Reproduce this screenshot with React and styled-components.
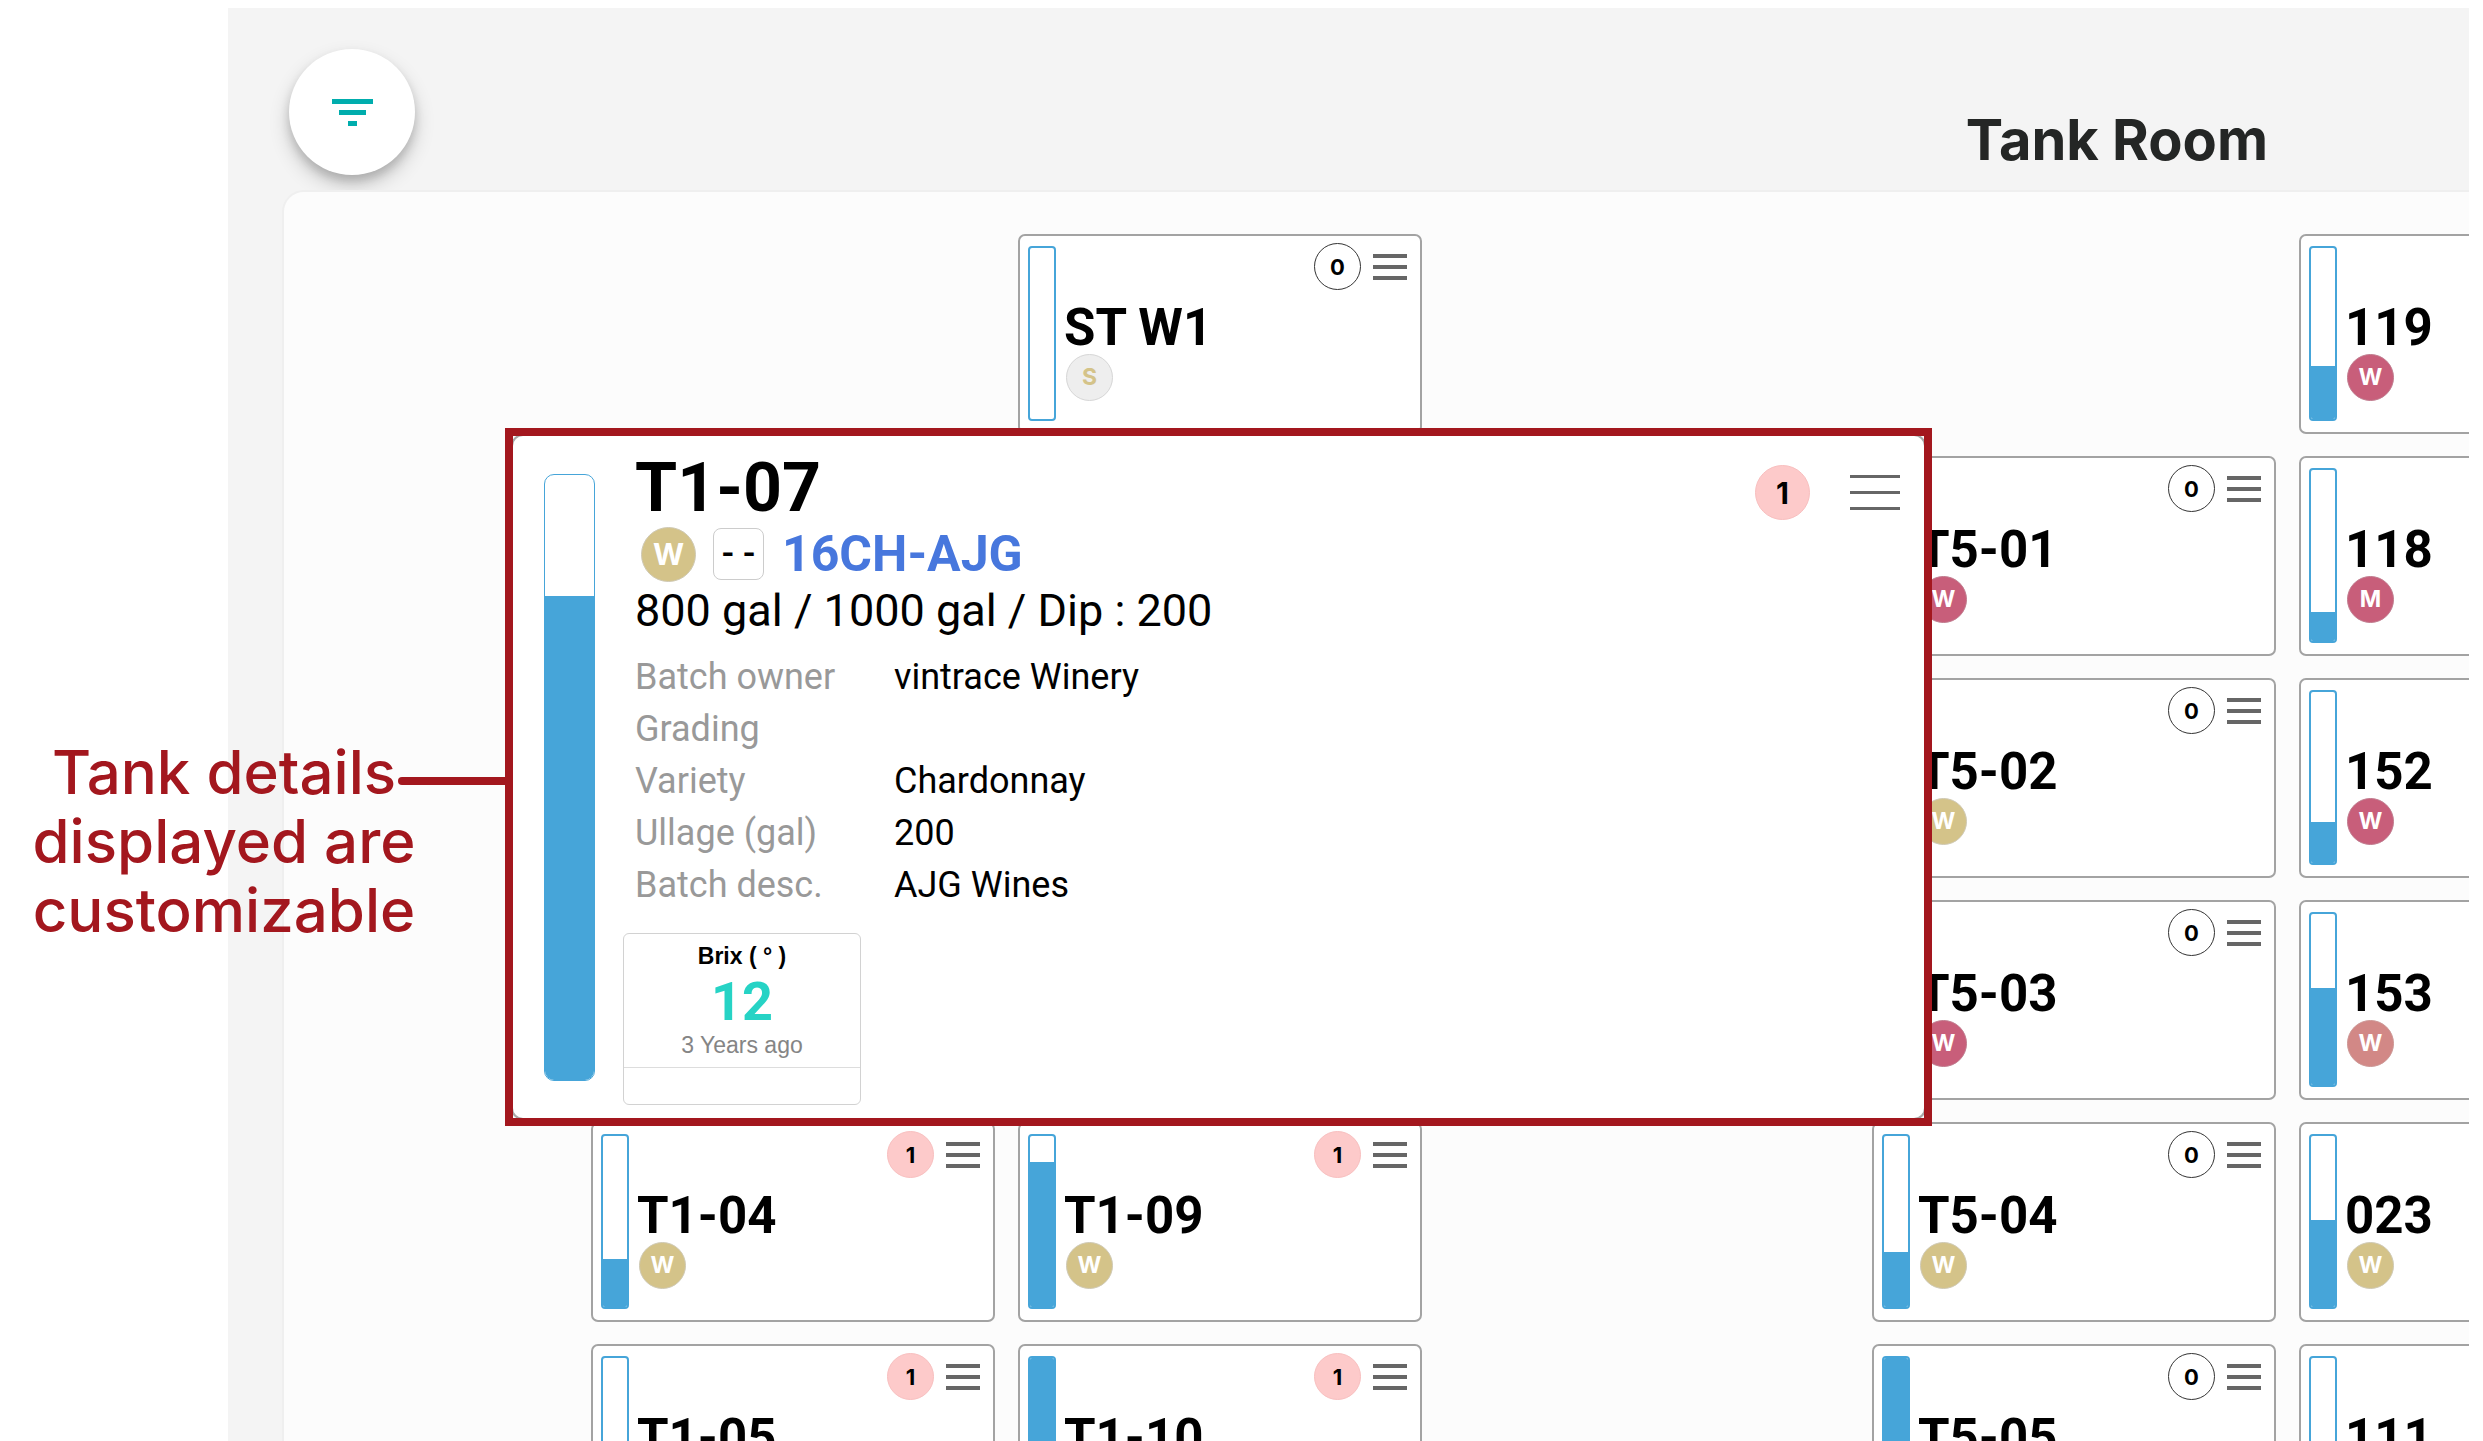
import React from "react";
import styled, { createGlobalStyle } from "styled-components";

const GlobalStyle = createGlobalStyle`
  *, *::before, *::after { box-sizing: border-box; }
  body {
    margin: 0;
    background: #fff;
    color: #000;
    font-family: Roboto, "Liberation Sans", sans-serif;
  }
  button { font: inherit; color: inherit; padding: 0; cursor: pointer; }
  h1, h2, p, dl, dd { margin: 0; }
`;

const geometric = `Inter, "Open Sans", sans-serif`;

const tones = {
  white: { bg: "#d4c389", fg: "#fff", line: "#cfc9b4" },
  red: { bg: "#c85e7a", fg: "#fff", line: "#c07a8d" },
  rose: { bg: "#d28886", fg: "#fff", line: "#cc9694" },
  sparkling: { bg: "#eeeeee", fg: "#d4c389", line: "#d6d6d6" },
};

const Page = styled.div`
  position: relative;
  height: 100vh;
  overflow: hidden;
  padding: 8px 14px 0 228px;
`;

const Room = styled.main`
  display: flex;
  flex-direction: column;
  padding-left: 54px;
  overflow: hidden;
  background: #f4f4f4;
`;

const Header = styled.header`
  display: flex;
  flex: none;
  justify-content: space-between;
  align-items: flex-start;
  height: 182px;
  padding: 41px 201px 0 7px;
`;

const FilterButton = styled.button`
  display: grid;
  place-items: center;
  width: 126px;
  height: 126px;
  padding: 2px 0 0 2px;
  border: 0;
  border-radius: 50%;
  background: #fff;
  box-shadow: 0 10px 20px rgba(0, 0, 0, 0.19), 0 6px 10px rgba(0, 0, 0, 0.15);
`;

const RoomTitle = styled.h1`
  padding-top: 59px;
  color: #242625;
  font: 700 56px/64px ${geometric};
`;

const Board = styled.section`
  display: grid;
  flex: 1;
  grid-template-columns: repeat(5, 404px);
  grid-auto-rows: 200px;
  gap: 22px 23px;
  margin-right: -24px;
  padding: 42px 0 42px 307px;
  overflow: hidden;
  border: 2px solid #efefef;
  border-radius: 22px;
  background: #fcfcfc;
`;

const Card = styled.article`
  display: flex;
  grid-column: ${(p) => p.$col};
  grid-row: ${(p) => p.$row};
  gap: 8px;
  padding: 7px 13px 7px 8px;
  border: 2px solid #a3a3a3;
  border-radius: 7px;
  background: #fff;
`;

const Gauge = styled.div`
  display: flex;
  flex: none;
  flex-direction: column;
  justify-content: flex-end;
  width: ${(p) => (p.$large ? 51 : 28)}px;
  height: ${(p) => (p.$large ? 607 : 175)}px;
  margin-top: ${(p) => (p.$large ? 0 : 3)}px;
  overflow: hidden;
  border: ${(p) => (p.$large ? 1 : 2)}px solid #46a5d9;
  border-radius: ${(p) => (p.$large ? 10 : 4)}px;
  background: #fff;
`;

const Level = styled.div`
  background: #46a5d9;
`;

const CardBody = styled.div`
  flex: 1;
`;

const Tools = styled.div`
  display: flex;
  justify-content: flex-end;
  align-items: center;
  gap: ${(p) => (p.$large ? 40 : 12)}px;
`;

const Count = styled.span`
  display: grid;
  place-items: center;
  width: ${(p) => (p.$large ? 55 : 47)}px;
  height: ${(p) => (p.$large ? 55 : 47)}px;
  border: 1px solid ${(p) => (p.$alert ? "#f8bfbf" : "#333")};
  border-radius: 50%;
  background: ${(p) => (p.$alert ? "#fdcaca" : "#fff")};
  font: 700 ${(p) => (p.$large ? 30 : 22)}px/1 ${geometric};
`;

const Burger = styled.button`
  display: flex;
  flex-direction: column;
  justify-content: space-between;
  width: ${(p) => (p.$large ? 50 : 34)}px;
  height: ${(p) => (p.$large ? 35 : 26)}px;
  border: 0;
  background: none;
`;

const Bar = styled.span`
  height: ${(p) => (p.$large ? 3 : 4)}px;
  background: #666;
`;

const TankName = styled.h2`
  padding: 10px 0 0 0;
  font-size: 51px;
  font-weight: 700;
  line-height: 56px;
`;

const CardChip = styled.div`
  margin: -2px 0 0 2px;
`;

const Chip = styled.span`
  display: grid;
  place-items: center;
  width: ${(p) => (p.$large ? 55 : 47)}px;
  height: ${(p) => (p.$large ? 55 : 47)}px;
  border: 1px solid ${(p) => tones[p.$tone].line};
  border-radius: 50%;
  background: ${(p) => tones[p.$tone].bg};
  color: ${(p) => tones[p.$tone].fg};
  font: 700 ${(p) => (p.$large ? 30 : 23)}px/1 ${geometric};
`;

const Callout = styled.aside`
  position: absolute;
  top: 428px;
  left: 505px;
  width: 1427px;
  height: 698px;
  overflow: hidden;
  border: 8px solid #a3171e;
  background: #fcfcfc;
`;

const Detail = styled.article`
  display: flex;
  gap: 28px;
  height: 686px;
  margin: -2px;
  padding: 38px 24px 0 31px;
  border: 2px solid #a8a8a8;
  border-radius: 12px;
  background: #fff;
`;

const DetailBody = styled.div`
  flex: 1;
  margin-top: -23px;
`;

const Summary = styled.div`
  padding-left: 12px;
`;

const DetailTop = styled.div`
  display: flex;
  justify-content: space-between;
  align-items: flex-end;
  height: 75px;
  padding-bottom: 6px;
`;

const DetailName = styled.h2`
  font-size: 68px;
  font-weight: 700;
  line-height: 64px;
`;

const BatchRow = styled.div`
  display: flex;
  align-items: center;
  height: 56px;
  padding-left: 6px;
`;

const Grade = styled.span`
  display: grid;
  place-items: center;
  width: 51px;
  height: 52px;
  margin: 0 18px 0 17px;
  border: 1px solid #ccc;
  border-radius: 8px;
  font: 500 36px/1 Roboto, sans-serif;
`;

const BatchLink = styled.a`
  color: #4777dd;
  font-size: 50px;
  font-weight: 700;
  line-height: 56px;
  text-decoration: none;
`;

const Volume = styled.p`
  padding-top: 1px;
  font-size: 45px;
  line-height: 56px;
`;

const Facts = styled.dl`
  display: grid;
  grid-template-columns: 259px 1fr;
  grid-auto-rows: 52px;
  margin-top: 12px;
  font-size: 36px;
  line-height: 52px;
`;

const FactLabel = styled.dt`
  color: #999;
`;

const Measure = styled.section`
  width: 238px;
  height: 172px;
  margin-top: 22px;
  padding-top: 8px;
  border: 1px solid #d2d2d2;
  border-radius: 6px;
  font-family: "Liberation Sans", Arial, sans-serif;
  font-size: 23px;
  line-height: 28px;
  text-align: center;
`;

const MeasureName = styled.p`
  font-weight: 700;
`;

const MeasureValue = styled.p`
  padding-top: 4px;
  color: #26d3c5;
  font: 700 54px/56px Roboto, sans-serif;
`;

const MeasureAge = styled.p`
  padding: 1px 0 8px;
  border-bottom: 1px solid #ddd;
  color: #858585;
`;

const Note = styled.p`
  position: absolute;
  top: 738px;
  left: 14px;
  width: 420px;
  color: #a3171e;
  font: 500 60px/69px ${geometric};
  text-align: center;
`;

const Connector = styled.div`
  position: absolute;
  top: 777px;
  left: 398px;
  width: 107px;
  height: 8px;
  border-radius: 4px 0 0 4px;
  background: #a3171e;
`;

const tanks = [
  { name: "ST W1", col: 2, row: 1, level: 0, count: 0, code: "S", tone: "sparkling" },
  { name: "119", col: 5, row: 1, level: 31, code: "W", tone: "red" },
  { name: "T5-01", col: 4, row: 2, level: 0, count: 0, code: "W", tone: "red" },
  { name: "118", col: 5, row: 2, level: 17, code: "M", tone: "red" },
  { name: "T5-02", col: 4, row: 3, level: 0, count: 0, code: "W", tone: "white" },
  { name: "152", col: 5, row: 3, level: 24, code: "W", tone: "red" },
  { name: "T5-03", col: 4, row: 4, level: 0, count: 0, code: "W", tone: "red" },
  { name: "153", col: 5, row: 4, level: 57, code: "W", tone: "rose" },
  { name: "T1-04", col: 1, row: 5, level: 28, count: 1, code: "W", tone: "white" },
  { name: "T1-09", col: 2, row: 5, level: 85, count: 1, code: "W", tone: "white" },
  { name: "T5-04", col: 4, row: 5, level: 32, count: 0, code: "W", tone: "white" },
  { name: "023", col: 5, row: 5, level: 51, code: "W", tone: "white" },
  { name: "T1-05", col: 1, row: 6, level: 0, count: 1 },
  { name: "T1-10", col: 2, row: 6, level: 100, count: 1 },
  { name: "T5-05", col: 4, row: 6, level: 100, count: 0 },
  { name: "111", col: 5, row: 6, level: 0 },
];

const facts = [
  ["Batch owner", "vintrace Winery"],
  ["Grading", ""],
  ["Variety", "Chardonnay"],
  ["Ullage (gal)", "200"],
  ["Batch desc.", "AJG Wines"],
];

function TankTools({ count, large }) {
  return (
    <Tools $large={large}>
      <Count $alert={count > 0} $large={large}>{count}</Count>
      <Burger type="button" aria-label="Tank menu" $large={large}>
        <Bar $large={large} />
        <Bar $large={large} />
        <Bar $large={large} />
      </Burger>
    </Tools>
  );
}

const ToolsSpace = styled.div`
  height: 47px;
`;

function TankCard({ tank }) {
  return (
    <Card $col={tank.col} $row={tank.row}>
      <Gauge>
        <Level style={{ height: `${tank.level}%` }} />
      </Gauge>
      <CardBody>
        {tank.count === undefined ? <ToolsSpace /> : <TankTools count={tank.count} />}
        <TankName>{tank.name}</TankName>
        {tank.code && (
          <CardChip>
            <Chip $tone={tank.tone}>{tank.code}</Chip>
          </CardChip>
        )}
      </CardBody>
    </Card>
  );
}

export default function App() {
  return (
    <>
      <GlobalStyle />
      <Page>
        <Room>
          <Header>
            <FilterButton type="button" aria-label="Filter tanks">
              <svg width="42" height="28" viewBox="0 0 42 28" fill="#00adad" aria-hidden="true">
                <path d="M0 0h41v5H0zM7 11h27v5H7zM16 22h9v5h-9z" />
              </svg>
            </FilterButton>
            <RoomTitle>Tank Room</RoomTitle>
          </Header>
          <Board>
            {tanks.map((tank) => (
              <TankCard key={tank.name} tank={tank} />
            ))}
          </Board>
        </Room>

        <Callout>
          <Detail>
            <Gauge $large>
              <Level style={{ height: "80%" }} />
            </Gauge>
            <DetailBody>
              <Summary>
                <DetailTop>
                  <DetailName>T1-07</DetailName>
                  <TankTools count={1} large />
                </DetailTop>
                <BatchRow>
                  <Chip $tone="white" $large>W</Chip>
                  <Grade>- -</Grade>
                  <BatchLink href="#batch">16CH-AJG</BatchLink>
                </BatchRow>
                <Volume>800 gal / 1000 gal / Dip : 200</Volume>
                <Facts>
                  {facts.map(([label, value]) => (
                    <React.Fragment key={label}>
                      <FactLabel>{label}</FactLabel>
                      <dd>{value}</dd>
                    </React.Fragment>
                  ))}
                </Facts>
              </Summary>
              <Measure>
                <MeasureName>Brix ( ° )</MeasureName>
                <MeasureValue>12</MeasureValue>
                <MeasureAge>3 Years ago</MeasureAge>
              </Measure>
            </DetailBody>
          </Detail>
        </Callout>

        <Note>Tank details displayed are customizable</Note>
        <Connector />
      </Page>
    </>
  );
}
